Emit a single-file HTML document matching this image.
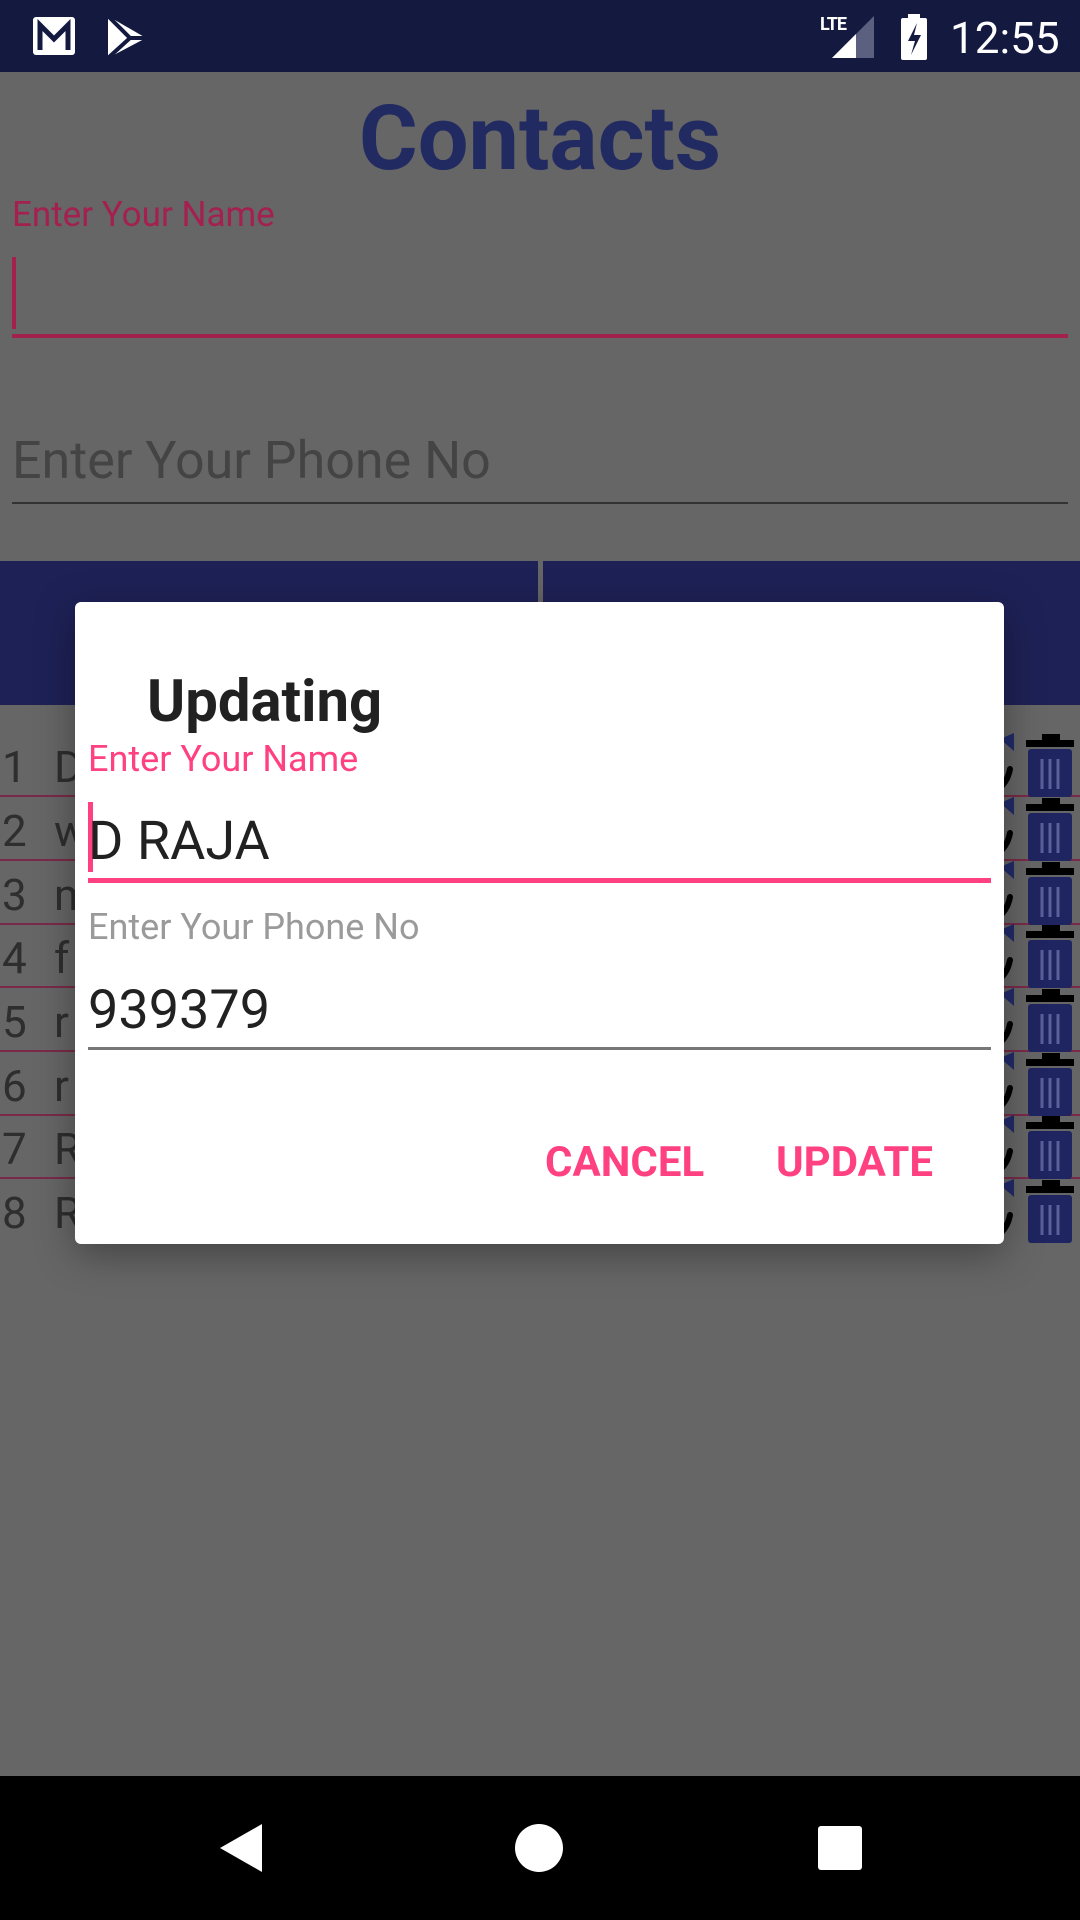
<!DOCTYPE html>
<html><head><meta charset="utf-8"><style>
*{margin:0;padding:0;box-sizing:border-box}
body{width:1080px;height:1920px;position:relative;overflow:hidden;background:#666;font-family:"Roboto","Liberation Sans",sans-serif}
.a{position:absolute}
.row{position:absolute;left:0;width:1080px;height:64px;border-bottom:2px solid #7a2a48;font-size:44px;color:#2e2e2e}
.row .n{position:absolute;left:2px;top:8px}
.row .t{position:absolute;left:54px;top:8px}
</style></head><body>
<div class="a" style="left:0;top:0;width:1080px;height:72px;background:#141940"></div>
<svg class="a" style="left:32px;top:16px" width="44" height="40" viewBox="0 0 44 40"><rect x="1" y="1" width="42" height="38" rx="3" fill="#fff"/><path d="M8 34V9l14 14 14-14v25" stroke="#141940" stroke-width="5" fill="none"/></svg>
<svg class="a" style="left:106px;top:14px" width="42" height="46" viewBox="0 0 42 46"><path d="M2 2L40 24 2 44Z" fill="#fff"/><path d="M2 2L24 24 2 44M24 24L40 24" stroke="#141940" stroke-width="4" fill="none"/></svg>
<div class="a" style="left:820px;top:14px;font-size:18px;font-weight:bold;color:#fff;letter-spacing:-1px">LTE</div>
<svg class="a" style="left:830px;top:14px" width="46" height="46" viewBox="0 0 46 46"><path d="M44 2V44H2Z" fill="#5b5f80"/><path d="M26 20V44H2Z" fill="#fff"/></svg>
<svg class="a" style="left:900px;top:14px" width="28" height="46" viewBox="0 0 28 46"><rect x="8" y="0" width="12" height="5" fill="#fff"/><rect x="1" y="4" width="26" height="42" rx="2" fill="#fff"/><path d="M17 9L8 27h7l-4 14 10-20h-7z" fill="#141940"/></svg>
<div class="a" style="left:950px;top:12px;font-size:44px;color:#fff">12:55</div>

<div class="a" style="left:0;top:86px;width:1080px;text-align:center;font-size:90px;font-weight:bold;color:#222a62">Contacts</div>
<div class="a" style="left:12px;top:194px;font-size:35px;color:#a3204f">Enter Your Name</div>
<div class="a" style="left:12px;top:257px;width:4px;height:72px;background:#a3204f"></div>
<div class="a" style="left:12px;top:334px;width:1056px;height:4px;background:#a3204f"></div>
<div class="a" style="left:12px;top:430px;font-size:52px;color:#444">Enter Your Phone No</div>
<div class="a" style="left:12px;top:502px;width:1056px;height:2px;background:#333"></div>
<div class="a" style="left:0;top:561px;width:538px;height:144px;background:#1e2156"></div>
<div class="a" style="left:543px;top:561px;width:537px;height:144px;background:#1e2156"></div>

<div class="row" style="top:733px"><span class="n">1</span><span class="t">D</span></div>
<div class="row" style="top:797px"><span class="n">2</span><span class="t">w</span></div>
<div class="row" style="top:861px"><span class="n">3</span><span class="t">m</span></div>
<div class="row" style="top:924px"><span class="n">4</span><span class="t">f</span></div>
<div class="row" style="top:988px"><span class="n">5</span><span class="t">r</span></div>
<div class="row" style="top:1052px"><span class="n">6</span><span class="t">r</span></div>
<div class="row" style="top:1115px"><span class="n">7</span><span class="t">R</span></div>
<div class="row" style="top:1179px;border-bottom:none"><span class="n">8</span><span class="t">R</span></div>

<svg class="a" style="left:990px;top:730px" width="90" height="520" viewBox="0 0 90 520">
<defs><g id="ic">
<path d="M10 4L24 -2V16Z" fill="#232b6b"/>
<path d="M20 34C18 44 14 50 6 56" stroke="#000" stroke-width="6" fill="none" stroke-linecap="round"/>
<rect x="36" y="5" width="48" height="7" fill="#000"/><rect x="52" y="-1" width="18" height="7" fill="#000"/>
<rect x="38" y="14" width="44" height="48" rx="3" fill="#1f2560"/>
<path d="M52 24V54M60 24V54M68 24V54" stroke="#5a6098" stroke-width="3"/>
</g></defs>
<use href="#ic" y="5"/><use href="#ic" y="69"/><use href="#ic" y="133"/><use href="#ic" y="196"/>
<use href="#ic" y="260"/><use href="#ic" y="324"/><use href="#ic" y="387"/><use href="#ic" y="451"/>
</svg>

<div class="a" style="left:75px;top:602px;width:929px;height:642px;background:#fff;border-radius:6px;box-shadow:0 10px 40px rgba(0,0,0,.35)"></div>
<div class="a" style="left:147px;top:668px;font-size:58px;font-weight:bold;color:#212121">Updating</div>
<div class="a" style="left:88px;top:738px;font-size:36px;color:#ff4081">Enter Your Name</div>
<div class="a" style="left:88px;top:802px;width:5px;height:70px;background:#ff4081"></div>
<div class="a" style="left:88px;top:810px;font-size:54px;color:#212121">D RAJA</div>
<div class="a" style="left:88px;top:878px;width:903px;height:5px;background:#ff4081"></div>
<div class="a" style="left:88px;top:906px;font-size:36px;color:#9a9a9a">Enter Your Phone No</div>
<div class="a" style="left:88px;top:979px;font-size:54px;color:#212121">939379</div>
<div class="a" style="left:88px;top:1047px;width:903px;height:3px;background:#777"></div>
<div class="a" style="left:545px;top:1138px;font-size:42px;font-weight:bold;color:#ff4081">CANCEL</div>
<div class="a" style="left:776px;top:1138px;font-size:42px;font-weight:bold;color:#ff4081">UPDATE</div>

<div class="a" style="left:0;top:1776px;width:1080px;height:144px;background:#000"></div>
<svg class="a" style="left:216px;top:1822px" width="48" height="52" viewBox="0 0 48 52"><path d="M46 2V50L4 26Z" fill="#fff"/></svg>
<div class="a" style="left:515px;top:1824px;width:48px;height:48px;border-radius:50%;background:#fff"></div>
<div class="a" style="left:818px;top:1826px;width:44px;height:44px;border-radius:3px;background:#fff"></div>
</body></html>
